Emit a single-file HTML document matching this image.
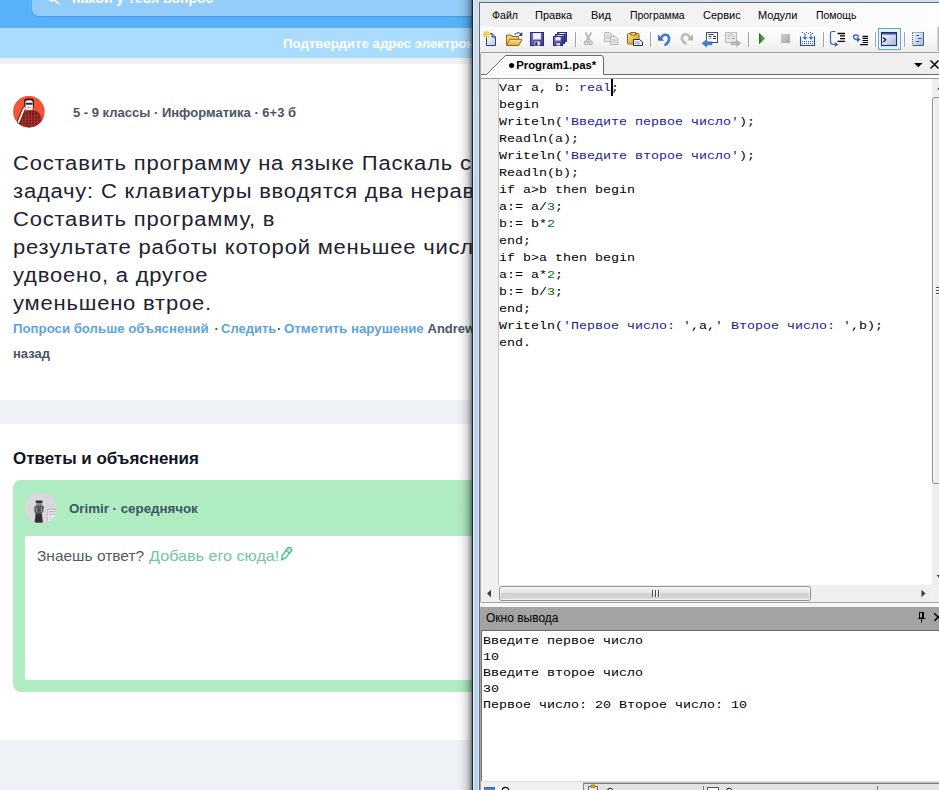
<!DOCTYPE html>
<html>
<head>
<meta charset="utf-8">
<style>
html,body{margin:0;padding:0;}
body{width:939px;height:790px;overflow:hidden;background:#fff;font-family:"Liberation Sans",sans-serif;}
#root{position:absolute;left:0;top:0;width:939px;height:790px;overflow:hidden;background:#fff;}
.abs{position:absolute;}
.t{position:absolute;white-space:nowrap;}
/* ---------- browser page ---------- */
#hdr{left:0;top:0;width:480px;height:28px;background:#57b2f8;}
#srch{left:32px;top:-10px;width:460px;height:26px;background:#94cdf9;border-radius:7px;box-shadow:0 1px 1px rgba(40,110,190,.35);}
#note{left:0;top:28px;width:480px;height:30px;background:#a9dcfe;}
#g1{left:0;top:58px;width:480px;height:6px;background:#edf1f5;}
#g2{left:0;top:400px;width:480px;height:24px;background:#eef1f5;}
#g3{left:0;top:740px;width:480px;height:50px;background:#eef1f5;}
.q{font-size:20px;line-height:28px;color:#1d2330;left:13px;letter-spacing:.72px;transform:scaleX(1.1);transform-origin:0 0;}
.lnk{font-size:13px;font-weight:bold;color:#5ea4dc;}
.meta{font-size:13px;font-weight:bold;color:#4b5563;}
#green{left:13px;top:480px;width:480px;height:212px;background:#b0ecc1;border-radius:8px;}
#ansbox{left:25px;top:536px;width:470px;height:144px;background:#fff;}
/* ---------- IDE window ---------- */
#shadow{left:456px;top:0;width:16px;height:790px;background:linear-gradient(to right,rgba(10,15,20,0),rgba(10,15,20,.025) 25%,rgba(10,15,20,.08) 50%,rgba(10,15,20,.2) 75%,rgba(10,15,20,.36) 88%,rgba(10,15,20,.58) 100%);}
#frame{left:474px;top:0;width:465px;height:790px;background:linear-gradient(#d2deed 0px,#c6d7ea 120px,#b9d1ea 380px,#b9d1ea 790px);}
#frameL{left:472px;top:0;width:1px;height:790px;background:#1d2428;}
#frameL2{left:473px;top:0;width:1px;height:790px;background:#e6f4fe;}
#frameL3{left:478px;top:0;width:1px;height:790px;background:#d8e7f6;}
#inner{left:479px;top:2px;width:460px;height:788px;background:#626a72;}
#inner2{left:480px;top:3px;width:1px;height:787px;background:linear-gradient(#f2f2f2 0px,#f2f2f2 50px,#a8a8a8 50px,#a8a8a8 599px,#f2f2f2 599px,#f2f2f2 604px,#a3a3a3 604px,#a3a3a3 787px);}
#opl{left:481px;top:630px;width:1px;height:152px;background:#707070;}
#client{left:481px;top:3px;width:458px;height:787px;background:#f0f0f0;}
#menubar{left:480px;top:3px;width:459px;height:24px;background:linear-gradient(to right,#f0f0f0 0%,#f1f1f1 35%,#f6f6f6 65%,#fcfcfc 90%,#fdfdfd 100%);}
.mi{font-size:11px;color:#000;top:8px;line-height:14px;transform-origin:0 50%;}
#toolbar{left:480px;top:27px;width:459px;height:25px;background:linear-gradient(#fdfdfd 0%,#f9f9f9 45%,#f1f1f1 80%,#ededed 100%);}
#tbline{left:481px;top:52px;width:458px;height:1px;background:#a0a0a0;}
#tabstrip{left:481px;top:53px;width:458px;height:21px;background:#efefef;}
#tabline{display:none;}
#tabgap{left:481px;top:75px;width:458px;height:3px;background:#fdfdfd;}
#edline{left:481px;top:78px;width:458px;height:1px;background:#9a9a9a;}
#editor{left:481px;top:79px;width:451px;height:507px;background:#fff;}
#gutter{left:481px;top:79px;width:17px;height:507px;background:#f0f0f0;}
#gutline{left:498px;top:79px;width:1px;height:507px;background:#c8c8c8;}
.code{font-family:"Liberation Mono",monospace;font-size:11.5px;line-height:17px;color:#000;left:499px;top:79px;white-space:pre;transform:scaleX(1.15942);transform-origin:0 0;}
.code .s{color:#1a1a9c;}
.code .k{color:#000;}
.code .n{color:#0a6a0a;}
.out{font-family:"Liberation Mono",monospace;font-size:11.5px;line-height:16px;color:#000;left:483px;top:633px;white-space:pre;transform:scaleX(1.15942);transform-origin:0 0;}
#vscroll{left:932px;top:79px;width:7px;height:506px;background:#eeeeee;}
#hscroll{left:481px;top:585px;width:449px;height:17px;background:#efefef;}
#hthumb{left:499px;top:586px;width:312px;height:15px;border:1px solid #8f8f8f;border-radius:2.5px;box-sizing:border-box;background:linear-gradient(#f3f3f3 0%,#e6e6e6 45%,#d0d0d0 50%,#d9d9d9 100%);box-shadow:inset 0 0 0 1px rgba(255,255,255,.7);}
#corner{left:930px;top:585px;width:9px;height:17px;background:#f0f0f0;}
#sepline{left:481px;top:602px;width:458px;height:1px;background:#a2a2a2;}
#sepband{left:481px;top:603px;width:458px;height:4px;background:#f6f6f6;}
#ohdr{left:481px;top:607px;width:458px;height:23px;background:#a3a3a3;}
#ohdrb{left:481px;top:630px;width:458px;height:1px;background:#6a6a6a;}
#opanel{left:481px;top:631px;width:458px;height:151px;background:#fff;}
#btabs{left:481px;top:782px;width:458px;height:8px;background:#e6e6e6;}
</style>
</head>
<body>
<div id="root">

<!-- ================= BROWSER PAGE ================= -->
<div class="abs" id="hdr"></div>
<div class="abs" id="srch"></div>
<div class="abs" id="note"></div>
<div class="abs" id="g1"></div>
<div class="abs" id="g2"></div>
<div class="abs" id="g3"></div>

<svg class="abs" style="left:46px;top:0" width="16" height="6" viewBox="0 0 16 6"><path d="M3.300 -0.400Q6.300 1.900 9.300 -0.400M9.600 0.900l3.300 3.100" stroke="#fff" stroke-width="1.600" fill="none" stroke-linecap="round"/></svg>
<div class="t" id="srchtxt" style="left:72px;top:-10px;font-size:14px;font-weight:bold;color:#fff;line-height:16px;">Какой у тебя вопрос</div>
<div class="t" id="notetxt" style="left:283px;top:36px;font-size:13.250px;font-weight:bold;color:#fff;line-height:16px;">Подтвердите адрес электронной почты</div>

<!-- avatar 1 -->
<svg class="abs" id="av1" style="left:13px;top:96px" width="32" height="32" viewBox="0 0 32 32">
<defs><clipPath id="c1"><circle cx="15.900" cy="15.700" r="15.800"/></clipPath></defs>
<circle cx="15.900" cy="15.700" r="15.800" fill="#f0553a"/>
<g clip-path="url(#c1)">
<path d="M3 32l1.600-5.600 7-10.200 2.800-1.700h6.500l3.500 1 3.600 4.400 1.200 6.500 .5 5.600z" fill="#7a1b1b"/>
<g stroke="#b23e36" stroke-width=".7"><path d="M9.500 18v14M12.500 15v17M15.500 15v17M18.500 15v17M21.500 15v17M24.500 17v15M27.500 20v12"/><path d="M8 20h19M6 23h23M5 26h25M4 29h27"/></g>
<rect x="11.200" y="2.500" width="9.700" height="10.500" rx="2.600" fill="#3a0c0c"/>
<rect x="12.300" y="4.300" width="7.600" height="9.800" rx="2.600" fill="#f7f3f2"/>
<rect x="12.600" y="6.800" width="7" height="1.900" fill="#1c2a20"/>
<path d="M14 11.300h4.500" stroke="#8a86b8" stroke-width=".8"/>
<path d="M5.400 26l5.900-14" stroke="#4a1010" stroke-width="3.400" stroke-linecap="round"/>
<path d="M5.600 25.800l5.700-13.600" stroke="#f3ecec" stroke-width="2" stroke-linecap="round"/>
<path d="M11 11.500l2 1.400" stroke="#e0d0d2" stroke-width="2"/>
</g></svg>
<div class="t meta" id="meta" style="left:73px;top:104.500px;line-height:16px;">5 - 9 классы · Информатика · 6+3 б</div>

<div class="t q" id="q1" style="top:149px;">Составить программу на языке Паскаль следующую</div>
<div class="t q" id="q2" style="top:177px;">задачу: С клавиатуры вводятся два неравных числа.</div>
<div class="t q" id="q3" style="top:205px;">Составить программу, в</div>
<div class="t q" id="q4" style="top:233px;">результате работы которой меньшее число будет</div>
<div class="t q" id="q5" style="top:261px;">удвоено, а другое</div>
<div class="t q" id="q6" style="top:289px;">уменьшено втрое.</div>

<div class="t lnk" id="l1" style="left:13px;top:321px;line-height:16px;transform:scaleX(1.017);transform-origin:0 0;">Попроси больше объяснений</div>
<div class="t meta" style="left:214.500px;top:321px;line-height:16px;">&#183;</div>
<div class="t meta" style="left:277px;top:321px;line-height:16px;">&#183;</div>
<div class="t lnk" id="l2" style="left:221px;top:321px;line-height:16px;">Следить</div>
<div class="t lnk" id="l3" style="left:283.500px;top:321px;line-height:16px;transform:scaleX(1.022);transform-origin:0 0;">Отметить нарушение</div>
<div class="t meta" id="l4" style="left:427.500px;top:321px;line-height:16px;">Andrew22</div>
<div class="t meta" id="l5" style="left:13px;top:345.500px;line-height:16px;">назад</div>

<div class="t" id="ansh" style="left:13px;top:448.500px;font-size:16px;font-weight:bold;color:#10141f;line-height:20px;transform:scaleX(1.0587);transform-origin:0 0;">Ответы и объяснения</div>
<div class="abs" id="green"></div>
<div class="abs" id="ansbox"></div>
<svg class="abs" id="av2" style="left:25px;top:492px" width="32" height="32" viewBox="0 0 32 32">
<defs><clipPath id="c2"><circle cx="15.900" cy="15.900" r="15.600"/></clipPath></defs>
<circle cx="15.900" cy="15.900" r="15.600" fill="#d9d7db"/>
<g clip-path="url(#c2)">
<rect x="10.800" y="8.600" width="6.600" height="2.400" fill="#26262a"/>
<rect x="11" y="10.800" width="6.200" height="3.500" fill="#8e8e92"/>
<path d="M9.500 14.500c0-1.500 9.500-1.500 9.500 0l-.8 5-1.700 2.500 1 8.500h-8l1-8.500-1.200-2.500z" fill="#55555a"/>
<path d="M11.500 15v5M16.500 15v5" stroke="#9a9a9e" stroke-width="1"/>
<path d="M11 22h6l.8 8.500h-7.600z" fill="#2f3034"/>
<rect x="22.300" y="16.800" width="8.800" height="12.800" fill="#efeff1"/>
<path d="M22.500 17.300h8.500M24 19.800h7M24 22.200h7" stroke="#a8a8ac" stroke-width="1"/>
<path d="M22.800 17v12.500" stroke="#b4b4b8" stroke-width="1"/>
<path d="M25.500 22.500v6.500" stroke="#c8c8cc" stroke-width="1"/>
</g></svg>
<div class="t" id="orimir" style="left:69px;top:500.500px;font-size:13px;font-weight:bold;color:#3b5560;line-height:16px;transform:scaleX(1.023);transform-origin:0 0;">Orimir · середнячок</div>
<div class="t" id="know" style="left:36.500px;top:546.600px;font-size:15px;color:#535a64;line-height:18px;transform:scaleX(1.032);transform-origin:0 0;">Знаешь ответ?</div>
<div class="t" id="know2" style="left:149px;top:546.600px;font-size:15px;color:#73c79a;line-height:18px;transform:scaleX(1.078);transform-origin:0 0;">Добавь его сюда!</div>
<svg class="abs" id="pencil" style="left:279px;top:546px" width="15" height="17" viewBox="0 0 15 17"><path d="M8.560 2.440A2.200 2.200 0 0 1 12.040 5.160L6.800 11.860L2.540 13.900L3.320 9.140Z" fill="#e4fbf0" stroke="#58bd8c" stroke-width="1.400" stroke-linejoin="round"/><path d="M8.560 2.440A2.200 2.200 0 0 1 12.040 5.160L10.500 7.130L7.020 4.410Z" fill="#aef0cf" stroke="#58bd8c" stroke-width="1.200" stroke-linejoin="round"/></svg>

<!-- ================= IDE WINDOW ================= -->
<div class="abs" id="shadow"></div>
<div class="abs" id="frame"></div>
<div class="abs" id="frameL"></div>
<div class="abs" id="frameL2"></div>
<div class="abs" id="frameL3"></div>
<div class="abs" id="inner"></div>
<div class="abs" id="client"></div>
<div class="abs" id="inner2"></div>
<div class="abs" id="menubar"></div>
<div class="t mi" id="m1" style="left:491.500px;transform:scaleX(.96);">Файл</div>
<div class="t mi" id="m2" style="left:535px;">Правка</div>
<div class="t mi" id="m3" style="left:591px;">Вид</div>
<div class="t mi" id="m4" style="left:630px;transform:scaleX(.948);">Программа</div>
<div class="t mi" id="m5" style="left:703px;">Сервис</div>
<div class="t mi" id="m6" style="left:758px;">Модули</div>
<div class="t mi" id="m7" style="left:816px;transform:scaleX(.952);">Помощь</div>
<div class="abs" id="toolbar"></div>

<svg class="abs" id="tbsvg" style="left:481px;top:27px" width="458" height="26" viewBox="481 27 458 26">
<defs>
<linearGradient id="gpage" x1="0" y1="0" x2="1" y2="1"><stop offset="0" stop-color="#ffffff"/><stop offset="1" stop-color="#b9c6e4"/></linearGradient>
<linearGradient id="gfold" x1="0" y1="0" x2="0" y2="1"><stop offset="0" stop-color="#fbe69a"/><stop offset="1" stop-color="#e6a52c"/></linearGradient>
<linearGradient id="ggold" x1="0" y1="0" x2="1" y2="1"><stop offset="0" stop-color="#fbe28a"/><stop offset="1" stop-color="#d8951c"/></linearGradient>
<linearGradient id="gflop" x1="0" y1="0" x2="1" y2="1"><stop offset="0" stop-color="#7474cc"/><stop offset="1" stop-color="#3a3a9a"/></linearGradient>
<linearGradient id="ggreen" x1="0" y1="0" x2="1" y2="0"><stop offset="0" stop-color="#2c6e24"/><stop offset="1" stop-color="#6fbf5a"/></linearGradient>
<linearGradient id="ggray" x1="0" y1="0" x2="1" y2="1"><stop offset="0" stop-color="#d2d2d2"/><stop offset="1" stop-color="#a4a4a4"/></linearGradient>
<linearGradient id="gwin" x1="0" y1="0" x2="1" y2="1"><stop offset="0" stop-color="#ffffff"/><stop offset="1" stop-color="#9fb2da"/></linearGradient>
<linearGradient id="gblue" x1="0" y1="0" x2="0" y2="1"><stop offset="0" stop-color="#5a98e6"/><stop offset="1" stop-color="#2a60b8"/></linearGradient>
</defs>
<!-- new -->
<path d="M486.5 33.5h5.5l3.5 3.5v8.5h-9z" fill="url(#gpage)" stroke="#2b3d6e"/>
<path d="M492 33.5v3.5h3.5" fill="none" stroke="#2b3d6e"/>
<rect x="483" y="31" width="7" height="7" fill="#fbf3a4"/><g stroke="#d2b030" stroke-width="1"><path d="M486.500 31v7M483 34.500h7M484 32l5 5M489 32l-5 5"/></g><rect x="485.500" y="33.500" width="2" height="2" fill="#fdf9b0"/>
<!-- open -->
<path d="M506.5 45.5v-10.5h4.5l1 1.5h6.5v3" fill="#f1d070" stroke="#8c6c22"/>
<path d="M506.5 45.5l3.2-6.2h12.3l-3.2 6.2z" fill="url(#gfold)" stroke="#8c6c22"/>
<path d="M514.8 34.8c1.8-2.6 4.6-2.8 6.2-.6" stroke="#36466f" fill="none" stroke-width="1.1"/>
<path d="M522.3 32v4h-4z" fill="#36466f"/>
<!-- save -->
<rect x="530.5" y="32.5" width="13" height="13" fill="url(#gflop)" stroke="#2a2a7c"/>
<rect x="533" y="33" width="8" height="6.5" fill="#eef1fc"/>
<rect x="534.5" y="41.5" width="5.5" height="4" fill="#dcdcec"/>
<rect x="535.3" y="42.3" width="2" height="3" fill="#1c1c30"/>
<!-- save all -->
<rect x="557.5" y="32.5" width="9" height="9" fill="url(#gflop)" stroke="#2a2a7c"/>
<rect x="559.5" y="33" width="5.5" height="2.5" fill="#e6e9fa"/>
<rect x="555.5" y="34.5" width="9" height="9" fill="url(#gflop)" stroke="#2a2a7c"/>
<rect x="557.5" y="35" width="5.5" height="2.5" fill="#e6e9fa"/>
<rect x="553.5" y="36.5" width="9" height="9" fill="url(#gflop)" stroke="#2a2a7c"/>
<rect x="555.5" y="37" width="5" height="3.5" fill="#eef1fc"/>
<rect x="556.5" y="43" width="3.5" height="2.5" fill="#d4d4e6"/>
<!-- sep -->
<path d="M575.5 32v15" stroke="#a6a6a6"/><path d="M576.5 32v15" stroke="#fbfbfb"/>
<!-- cut -->
<g stroke="#b2b2b2" fill="none"><path d="M585.3 32.4l4.6 8.3M591.3 32.4l-4.6 8.3" stroke-width="1.7"/><circle cx="586" cy="42.9" r="1.7" stroke-width="1.4"/><circle cx="590.6" cy="42.9" r="1.7" stroke-width="1.4"/></g>
<!-- copy -->
<path d="M604.5 32.5h5l2.5 2.5v6.5h-7.5z" fill="#e6e6e6" stroke="#bcbcbc"/>
<path d="M606 36h4M606 38h4" stroke="#c4c4c4"/>
<path d="M610.5 36.5h5l2.500 2.500v5.500h-7.500z" fill="#e9e9e9" stroke="#b4b4b4"/>
<path d="M612 40h4.500M612 42h4.500" stroke="#bdbdbd"/>
<!-- paste -->
<rect x="627.5" y="33.500" width="11.500" height="10.500" rx="1" fill="url(#ggold)" stroke="#8a6418"/>
<rect x="630.800" y="32.500" width="5" height="2.500" fill="#f3de8a" stroke="#8a6418"/>
<path d="M633.500 39.500h6l3 2.500v3.500h-9z" fill="#f2f4f8" stroke="#262e48"/>
<path d="M635 42h5M635 43.800h5" stroke="#8a93ad" stroke-width=".8"/>
<!-- sep -->
<path d="M650.500 32v15" stroke="#a6a6a6"/><path d="M651.500 32v15" stroke="#fbfbfb"/>
<!-- undo -->
<path d="M661.500 37.500c1.500-3.600 7.400-4 7.600 1c.1 2.600-1.500 4.700-3.700 6.300" fill="none" stroke="#3c7cd6" stroke-width="2.500" stroke-linecap="round"/>
<path d="M658 34.600v6.200h6.200z" fill="#3470cc"/>
<!-- redo -->
<path d="M689.500 37c-1.500-3.600-7.400-4-7.600 1c-.1 2.600 1.500 4.200 3.700 5.600" fill="none" stroke="#bcbcbc" stroke-width="2.500" stroke-linecap="round"/>
<path d="M693 34.200v6.200h-6.200z" fill="#b4b4b4"/>
<!-- nav back -->
<rect x="706.500" y="32.500" width="11" height="10" fill="#fdfdff" stroke="#484c56"/>
<path d="M708.500 34.500h5M708.500 36.500h3M713 36.500h3" stroke="#26388c"/><path d="M708.500 38.500h3" stroke="#9aa6cc"/><path d="M713 38.500h3" stroke="#1c2250"/>
<path d="M702 43.300l4.800-3.700v2.200h5.200v3h-5.200v2.200z" fill="url(#gblue)" stroke="#2a58a8" stroke-width=".5"/>
<!-- nav fwd -->
<rect x="725.500" y="32.500" width="11" height="10" fill="#e9e9e9" stroke="#bdbdbd"/>
<path d="M727.500 34.500h5M727.500 36.500h3M732 36.500h3M727.500 38.500h3" stroke="#bcbcbc"/><path d="M732 38.500h3" stroke="#a4a4a4"/>
<path d="M741 43.300l-4.800-3.700v2.200h-5.200v3h5.200v2.200z" fill="#b6b6b6" stroke="#a8a8a8" stroke-width=".5"/>
<!-- sep -->
<path d="M748.500 32v15" stroke="#a6a6a6"/><path d="M749.500 32v15" stroke="#fbfbfb"/>
<!-- run -->
<path d="M759 32.800v11.400l6.300-5.700z" fill="url(#ggreen)"/>
<!-- stop -->
<rect x="781" y="34" width="9" height="9" fill="url(#ggray)"/>
<!-- compile -->
<path d="M800.500 36.500v9h14v-9" fill="none" stroke="#2c4a8a" stroke-width="1.100"/>
<g fill="#3a5a9a"><rect x="802" y="32" width="1" height="1"/><rect x="804" y="33" width="1" height="1"/><rect x="806" y="32" width="1" height="1"/><rect x="808" y="33" width="1" height="1"/><rect x="810" y="32" width="1" height="1"/><rect x="812" y="33" width="1" height="1"/>
<rect x="802" y="41" width="1" height="1"/><rect x="804" y="41" width="1" height="1"/><rect x="806" y="41" width="1" height="1"/><rect x="808" y="41" width="1" height="1"/><rect x="810" y="41" width="1" height="1"/><rect x="812" y="41" width="1" height="1"/>
<rect x="802" y="43" width="1" height="1"/><rect x="804" y="43" width="1" height="1"/><rect x="806" y="43" width="1" height="1"/><rect x="808" y="43" width="1" height="1"/><rect x="810" y="43" width="1" height="1"/><rect x="812" y="43" width="1" height="1"/></g>
<path d="M804.500 34v3h-2l2.500 3 2.500-3h-2v-3zM810.500 34v3h-2l2.500 3 2.500-3h-2v-3z" fill="#3c74c8"/>
<!-- sep -->
<path d="M823.500 32v15" stroke="#a6a6a6"/><path d="M824.500 32v15" stroke="#fbfbfb"/>
<!-- step over -->
<path d="M835.500 31.500h-3c-1.600 0-2 .600-2 2v8c0 2.200 1 3 3 3h2" stroke="#3a64b4" fill="none" stroke-width="1.200"/>
<path d="M834.800 42l3.700 2.500-3.700 2.500z" fill="#3a64b4"/>
<path d="M837.500 33.500h7.500M840 35.900h5M840 38.600h5M837.500 41.400h7.500" stroke="#000" stroke-width="1.400"/>
<!-- step into -->
<path d="M858.800 36.600c-.6-2-5.200-2.400-5.300.2c-.1 2.400 2.400 2.700 4.500 2.700" stroke="#3a64b4" fill="none" stroke-width="1.400"/>
<path d="M857 36.700l3.700 2.800-3.700 2.800z" fill="#3a64b4"/>
<path d="M862.500 36.300h5.500M862.500 38.400h5.500M862.500 40.500h5.500M862.500 42.500h5.500M860 44.600h8" stroke="#000" stroke-width="1.200"/>
<!-- sep -->
<path d="M875.500 32v15" stroke="#a6a6a6"/><path d="M876.500 32v15" stroke="#fbfbfb"/>
<!-- output window (checked) -->
<rect x="878.500" y="28.500" width="22" height="21" fill="#dbeefb" stroke="#62a2d4"/>
<rect x="879.500" y="29.500" width="20" height="19" fill="none" stroke="#eef8fe"/>
<rect x="881.500" y="32.500" width="15" height="13" fill="url(#gwin)" stroke="#1c2a58"/>
<rect x="882" y="33" width="14" height="1.600" fill="#3c5cb4"/>
<path d="M883 37.500l2.800 2.300-2.800 2.300" stroke="#000" fill="none" stroke-width="1.100"/>
<!-- sep -->
<path d="M904.500 32v15" stroke="#a6a6a6"/><path d="M905.500 32v15" stroke="#fbfbfb"/>
<!-- last icon -->
<rect x="912.500" y="32.500" width="11" height="13" fill="url(#gwin)" stroke="none"/>
<path d="M923.500 32v13.500h-11" fill="none" stroke="#4a5e94"/>
<path d="M912.500 32.500h11" stroke="#4a5e94" stroke-dasharray="1 1"/>
<path d="M912.500 33v12" stroke="#4a5e94" stroke-dasharray="1 1"/>
<path d="M916 35.500h3M918 38.500h3.500M916 41.500h3" stroke="#3a5cae" stroke-width="1.200"/>
<!-- right edge -->
<rect x="937.500" y="27" width="1.500" height="24" fill="#b4b4b4"/>
</svg>
<div class="abs" id="tbline"></div>
<div class="abs" id="tabstrip"></div>
<div class="abs" id="tabline"></div>

<svg class="abs" id="tabsvg" style="left:481px;top:53px" width="458" height="26" viewBox="481 53 458 26">
<path d="M486.500 74.500L505.500 55.500H601q2.500 0 2.500 2.500V74.500" fill="#fcfcfc" stroke="#6a6a6a"/>
<path d="M481 74.500h5.500M603.500 74.500H939" stroke="#6a6a6a"/>
<path d="M914 63h8.500l-4.250 4.300z" fill="#000"/>
<path d="M930.500 60.500l8 8M938.500 60.500l-8 8" stroke="#000" stroke-width="1.500"/>
</svg>
<div class="t" id="tabtxt" style="left:509px;top:58px;font-size:11px;font-weight:bold;color:#000;line-height:14px;transform-origin:0 0;transform:scaleX(1.03);"><span style="display:inline-block;width:5px;height:5px;border-radius:3px;background:#000;vertical-align:1px;margin-right:2px;"></span>Program1.pas*</div>
<div class="abs" id="tabgap"></div>
<div class="abs" id="edline"></div>
<div class="abs" id="editor"></div>
<div class="abs" id="gutter"></div>
<div class="abs" id="gutline"></div>
<div class="t code" id="code">Var a, b: <span class="s">real</span>;
begin
Writeln(<span class="s">'Введите первое число'</span>);
Readln(a);
Writeln(<span class="s">'Введите второе число'</span>);
Readln(b);
if a&gt;b then begin
a:= a/<span class="n">3</span>;
b:= b*<span class="n">2</span>
end;
if b&gt;a then begin
a:= a*<span class="n">2</span>;
b:= b/<span class="n">3</span>;
end;
Writeln(<span class="s">'Первое число: '</span>,a,<span class="s">' Второе число: '</span>,b);
end.</div>
<div class="abs" id="caret" style="left:611px;top:79px;width:2px;height:17px;background:#000;"></div>
<div class="abs" id="vscroll"></div>
<div class="abs" id="hscroll"></div>
<div class="abs" id="hthumb"></div>
<div class="abs" id="corner"></div>
<div class="abs" id="sepline"></div>
<div class="abs" id="sepband"></div>
<div class="abs" id="ohdr"></div>
<div class="abs" id="ohdrb"></div>
<div class="t" id="ohdrt" style="left:486px;top:611px;font-size:12px;color:#000;line-height:14px;">Окно вывода</div>
<div class="abs" id="opanel"></div>
<div class="abs" id="opl"></div>
<div class="t out" id="out">Введите первое число
10
Введите второе число
30
Первое число: 20 Второе число: 10</div>
<div class="abs" id="btabs"></div>
<!-- scrollbar & header glyphs -->
<svg class="abs" id="sbsvg" style="left:481px;top:79px" width="458" height="552" viewBox="481 79 458 552">
<defs><linearGradient id="gvth" x1="0" y1="0" x2="1" y2="0"><stop offset="0" stop-color="#f4f4f4"/><stop offset=".5" stop-color="#e6e6e6"/><stop offset=".5" stop-color="#d4d4d4"/><stop offset="1" stop-color="#dadada"/></linearGradient></defs>
<!-- vertical thumb -->
<rect x="932.500" y="97.500" width="15" height="386" rx="2.500" fill="url(#gvth)" stroke="#8f8f8f"/>
<path d="M933.500 99v383" stroke="#fafafa" stroke-width="1"/>
<path d="M936 287.500h4M936 290.500h4M936 293.500h4" stroke="#4a4a4a" stroke-width="1"/>
<path d="M936 288.500h4M936 291.500h4M936 294.500h4" stroke="#fcfcfc" stroke-width="1"/>
<!-- up / down arrows -->
<path d="M937 89.500l3.500-3.800v3.800z" fill="#3a3a3a"/>
<path d="M936.500 575l4 4.200v-4.200z" fill="#3a3a3a"/>
<!-- h arrows -->
<path d="M487 593.500l4-3.800v7.600z" fill="#3a3a3a"/>
<path d="M925.500 593.500l-4-3.800v7.600z" fill="#3a3a3a"/>
<!-- h grip -->
<path d="M652.500 590v7M655.500 590v7M658.500 590v7" stroke="#4a4a4a"/>
<path d="M653.500 590v7M656.500 590v7M659.500 590v7" stroke="#fcfcfc"/>
<!-- pin -->
<rect x="919.500" y="612.500" width="4" height="5.500" fill="none" stroke="#000"/>
<rect x="922" y="612" width="2" height="6" fill="#000"/>
<path d="M918 618.500h7.500M921.500 619v3.500" stroke="#000"/>
<!-- close -->
<path d="M934.200 613.200l7.800 7.800M942 613.200l-7.800 7.800" stroke="#000" stroke-width="1.500"/>
</svg>
<!-- bottom tabs -->
<div class="abs" style="left:481px;top:781px;width:458px;height:1px;background:#dcdcdc;"></div>
<div class="abs" style="left:481px;top:782px;width:102px;height:8px;background:#f0f0f0;"></div>
<div class="abs" style="left:583px;top:782px;width:356px;height:8px;background:#e3e3e3;"></div>
<div class="abs" style="left:583px;top:782px;width:356px;height:1px;background:#c4c4c4;"></div>
<div class="abs" style="left:583px;top:783px;width:356px;height:1px;background:#7c7c7c;"></div>
<div class="abs" style="left:583px;top:783px;width:1px;height:7px;background:#858585;"></div>
<div class="abs" style="left:484px;top:787px;width:11px;height:3px;background:linear-gradient(#2f62c8,#5a8ae0);"></div>
<svg class="abs" style="left:481px;top:783px" width="458" height="7" viewBox="481 783 458 7">
<path d="M502.300 790.500a3.200 3.200 0 0 1 6.400 0" fill="none" stroke="#111" stroke-width="1.200"/>
<rect x="588.500" y="786.500" width="9" height="5" fill="#f0ead0" stroke="#6a6a6a"/>
<rect x="591" y="785" width="4" height="2.500" fill="#d9a928" stroke="#8a6a18" stroke-width=".6"/>
<path d="M607.300 790.500a3 3 0 0 1 5.400-.8" fill="none" stroke="#333" stroke-width="1.100"/>
<path d="M703.500 786v5" stroke="#777"/>
<rect x="707.500" y="787.500" width="11" height="5" fill="#fdfdfd" stroke="#555"/>
<path d="M726.300 790.500a3 3 0 0 1 5.400-.8" fill="none" stroke="#333" stroke-width="1.100"/>
<path d="M877.500 786v5" stroke="#777"/>
</svg>


</div>
</body>
</html>
